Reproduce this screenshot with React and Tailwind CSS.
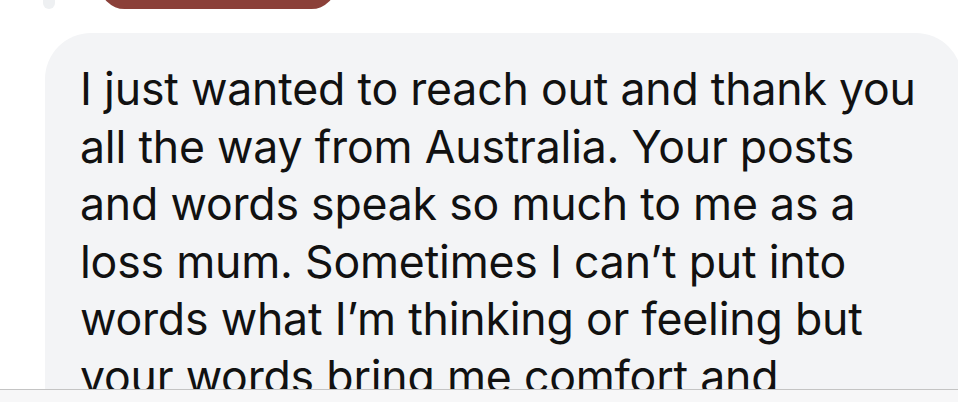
const LINES = [
  'I just wanted to reach out and thank you',
  'all the way from Australia. Your posts',
  'and words speak so much to me as a',
  'loss mum. Sometimes I can\u2019t put into',
  'words what I\u2019m thinking or feeling but',
  'your words bring me comfort and',
]

export default function App() {
  return (
    <div className="relative w-[958px] h-[402px] overflow-hidden bg-white font-['Inter',sans-serif]">
      <div className="absolute left-[43px] top-[-20px] w-[12px] h-[29px] rounded-full bg-[#eef0f2]" />
      <div className="absolute left-[100px] top-[-40px] w-[236px] h-[49px] rounded-full bg-[#8b4039]" />

      <div className="pt-[33px] pl-[45px]">
        <div className="w-[917px] h-[400px] rounded-[46px] bg-[#f3f4f6] pl-[35px] pt-[28px]">
          {LINES.map(l => (
            <p key={l} className="whitespace-nowrap text-[44.6px] leading-[57.5px] text-[#111111] tracking-[-0.2px]">
              {l}
            </p>
          ))}
        </div>
      </div>

      <div className="absolute left-0 right-0 bottom-0 h-[13px] border-t border-[#c4c4c4] bg-[#f7f7f8]" />
    </div>
  )
}
